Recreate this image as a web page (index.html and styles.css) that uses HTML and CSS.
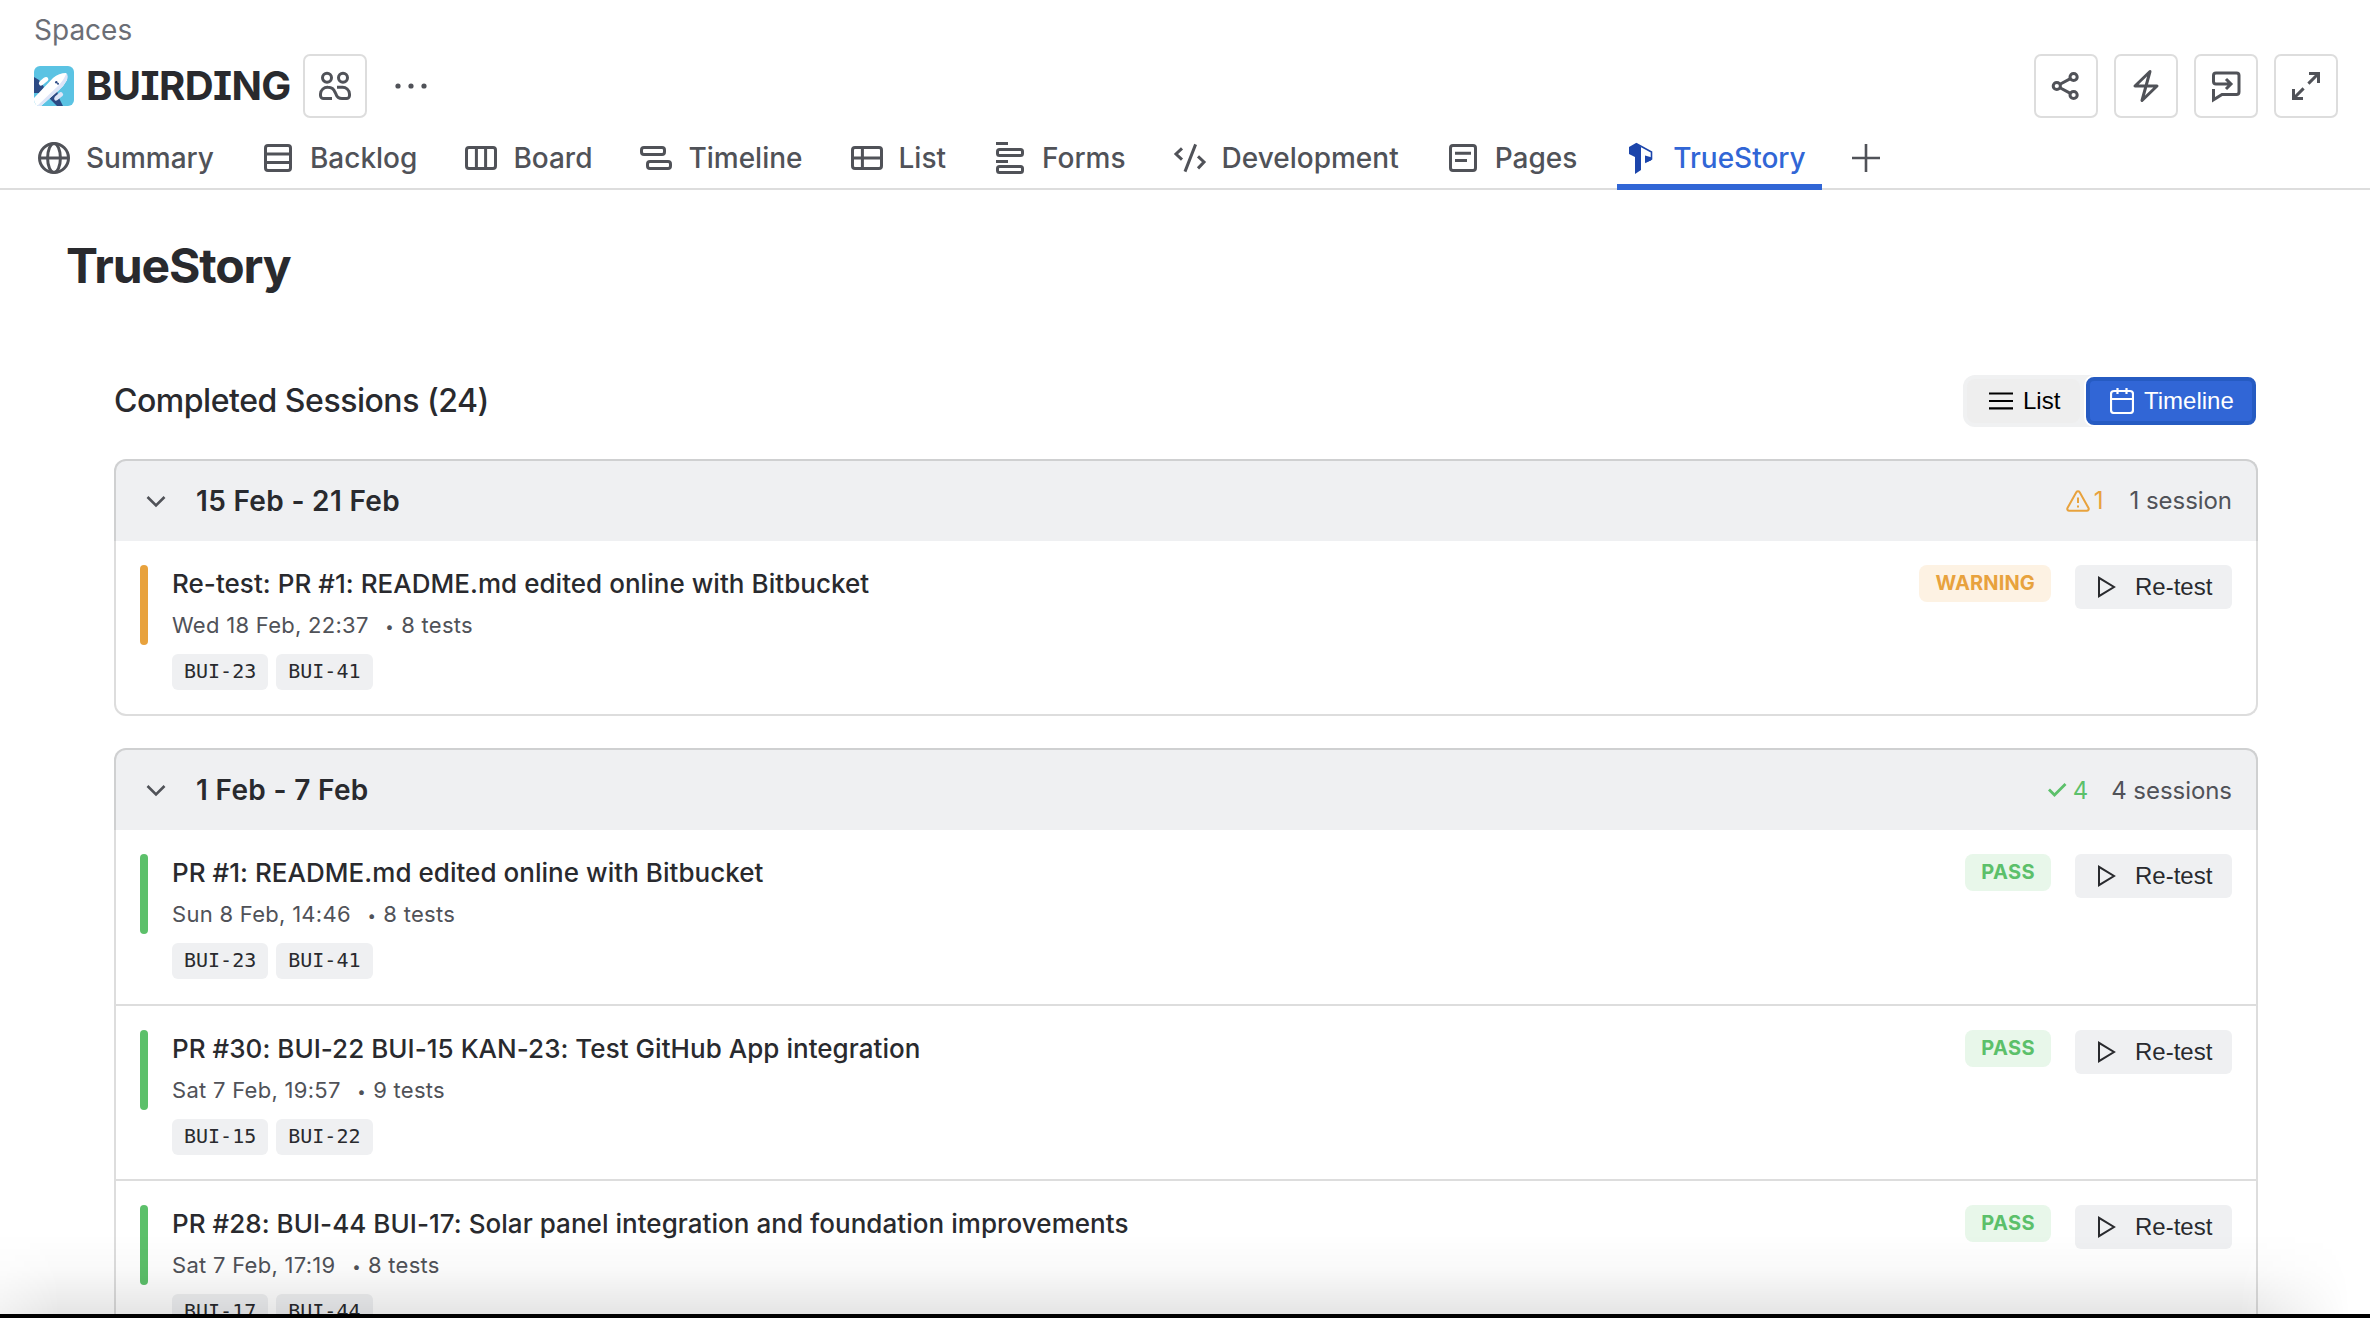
FILE: index.html
```html
<!DOCTYPE html>
<html lang="en">
<head>
    <meta charset="UTF-8">
    <meta name="viewport" content="width=device-width, initial-scale=1.0">
    <title>BUIRDING - TrueStory</title>
    <link rel="stylesheet" href="styles.css">
</head>
<body>
    <svg class="sprite" xmlns="http://www.w3.org/2000/svg">
        <symbol id="play" viewBox="0 0 24 24"><path d="M5 2.8v18.4L20 12z"/></symbol>
        <symbol id="chevron" viewBox="0 0 24 24"><path d="M3.5 8l8.5 8.5L20.500 8"/></symbol>
    </svg>

    <header class="top">
        <div class="breadcrumb">Spaces</div>
        <div class="title-row">
            <svg class="avatar" viewBox="0 0 40 40">
                <rect width="40" height="40" fill="#5bc3e3"/>
                <path d="M0 11l5 3 5 7-4 6H0zM15 32l8-7 2 7 4 8h-6z" fill="#2c4a84"/>
                <path d="M0 32L19 12Q25 7 32 7q2 3 1 7-3 6-9 11L7 40H4q-4 0-4-4z" fill="#fff"/>
                <path d="M32.500 7q2 3 .5 7-3 6-9 11L7 40H3L24 20q6-6 8.500-13z" fill="#dde5f8"/>
                <path d="M5.500 19q-1.500-2 0-3.500l4-3.500q3-2 4.500 0 1 2-.5 3l-5 4q-2 1.500-3 0z" fill="#fff"/>
                <path d="M20.500 34q-1-2 .5-3.500l4-3.500q2-2 3.500 0t0 3l-5 4q-2 1.500-3 0z" fill="#dde5f8"/>
                <circle cx="22.300" cy="16.300" r="1.200" fill="#2c4a84"/>
                <circle cx="24" cy="17.800" r="1" fill="#2c4a84"/>
            </svg>
            <h1 class="space-name">BUIRDING</h1>
            <button class="icon-btn">
                <svg class="icon" viewBox="0 0 16 16"><circle cx="4" cy="3.850" r="2.250"/><circle cx="12" cy="3.850" r="2.250"/><path d="M6.500 14.250H2.250c-.8 0-1.500-.7-1.500-1.500V12A3.500 3.500 0 0 1 4.500 8.600c2 0 3 1 3.500 2.500l.5 1c.5 1.500 1.300 2.150 3 2.150h2.250c.8 0 1.500-.7 1.500-1.500V12a3.500 3.500 0 0 0-3.750-3.400H9"/></svg>
            </button>
            <svg class="dots" viewBox="0 0 32 32"><circle cx="3" cy="16" r="2.600"/><circle cx="16" cy="16" r="2.600"/><circle cx="29" cy="16" r="2.600"/></svg>
            <div class="actions">
                <button class="icon-btn"><svg class="icon" viewBox="0 0 16 16"><circle cx="3.400" cy="8" r="1.800"/><circle cx="11.800" cy="3.500" r="1.800"/><circle cx="11.800" cy="12.500" r="1.800"/><path d="M5 7.100l5.200-2.800M5 8.900l5.200 2.800"/></svg></button>
                <button class="icon-btn"><svg class="icon" viewBox="0 0 16 16"><path d="M10 .75L2.500 8h11L6 15.250z" stroke-linejoin="round"/></svg></button>
                <button class="icon-btn"><svg class="icon" viewBox="0 0 16 16"><path d="M10 7H3c-.8 0-1.250-.6-1.250-1.250V2.750c0-.8.6-1.250 1.250-1.250h10.250c.8 0 1.250.6 1.250 1.250v8.250c0 .8-.6 1.250-1.250 1.250H6l-4.250 2.650V9.500M8 4.500L10.500 7 8 9.500"/></svg></button>
                <button class="icon-btn"><svg class="icon" viewBox="0 0 16 16"><path d="M9.500 1.750h4.750V6.500M14 2L9.200 6.800M6.500 14.250H1.750V9.500M2 14l4.800-4.800"/></svg></button>
            </div>
        </div>
        <nav class="tabs">
            <a class="tab"><svg class="icon" viewBox="0 0 16 16"><circle cx="8" cy="8" r="7.250"/><ellipse cx="8" cy="8" rx="3.200" ry="7.250"/><path d="M.75 8h14.500"/></svg><span>Summary</span></a>
            <a class="tab"><svg class="icon" viewBox="0 0 16 16"><rect x="1.750" y="1.750" width="12.500" height="12.500" rx="1.250"/><path d="M1.750 6h12.500M1.750 10.200h12.500"/></svg><span>Backlog</span></a>
            <a class="tab"><svg class="icon" viewBox="0 0 16 16"><rect x=".75" y="2.750" width="14.500" height="10.500" rx="1.250"/><path d="M5.700 2.750v10.500M10.300 2.750v10.500"/></svg><span>Board</span></a>
            <a class="tab"><svg class="icon" viewBox="0 0 16 16"><rect x=".75" y="2.750" width="11.500" height="3.500" rx="1.250"/><rect x="3.750" y="9.750" width="11.500" height="3.500" rx="1.250"/></svg><span>Timeline</span></a>
            <a class="tab"><svg class="icon" viewBox="0 0 16 16"><rect x=".75" y="2.750" width="14.500" height="10.500" rx="1.250"/><path d="M.75 8h14.500M5.700 2.750v10.500"/></svg><span>List</span></a>
            <a class="tab"><svg class="icon" viewBox="0 0 16 16"><path d="M1 .75h6M1 9.750h6"/><rect x="1.750" y="3.750" width="12.500" height="3" rx="1"/><rect x="1.750" y="12.250" width="12.500" height="3" rx="1"/></svg><span>Forms</span></a>
            <a class="tab"><svg class="icon" viewBox="0 0 16 16"><path d="M4 3.200L1 6l3 2.800M12 7.200L15 10l-3 3.200M10.800 1.200L5.500 14.800"/></svg><span>Development</span></a>
            <a class="tab"><svg class="icon" viewBox="0 0 16 16"><rect x="1.750" y="1.750" width="12.500" height="12.500" rx="1.250"/><path d="M4 5.600h8M4 9.200h6"/></svg><span>Pages</span></a>
            <a class="tab active"><svg class="logo" viewBox="0 0 32 32"><path d="M4 5l7-4 5 4v23l-6 4V15l-6-3z" fill="#1c45ab"/><path d="M11 1.500L26.500 10v7L21 20v-6" fill="none" stroke="#1c45ab" stroke-width="1.600"/><path d="M20 13.500l7 2-1 3-6 2z" fill="#1c45ab"/></svg><span>TrueStory</span></a>
            <svg class="icon plus" viewBox="0 0 16 16"><path d="M8 1v14M1 8h14"/></svg>
        </nav>
    </header>

    <main>
        <h2 class="page-title">TrueStory</h2>
        <div class="sessions">
            <div class="sessions-head">
                <h3>Completed Sessions (24)</h3>
                <div class="toggle">
                    <button class="toggle-btn"><svg viewBox="0 0 24 24"><path d="M0 4.500h24M0 12h24M0 19.300h24"/></svg>List</button>
                    <button class="toggle-btn selected"><svg viewBox="0 0 24 26"><rect x="1" y="3" width="22" height="22" rx="3"/><path d="M1 11h22M7.500 0v6M16.500 0v6"/></svg>Timeline</button>
                </div>
            </div>

            <section class="week">
                <div class="week-head">
                    <svg class="chevron"><use href="#chevron"/></svg>
                    <h4>15 Feb - 21 Feb</h4>
                    <span class="count warn"><svg viewBox="0 0 24 24"><path d="M10.300 3.200L1.500 19a1.900 1.900 0 0 0 1.700 2.800h17.600a1.900 1.900 0 0 0 1.700-2.800L13.700 3.200a2 2 0 0 0-3.400 0zM12 8.500v5.500M12 16.500v2"/></svg>1</span>
                    <span class="total">1 session</span>
                </div>
                <article class="session warning">
                    <div class="bar"></div>
                    <div class="info">
                        <div class="name">Re-test: PR #1: README.md edited online with Bitbucket</div>
                        <div class="meta"><span>Wed 18 Feb, 22:37</span><span><i>•</i> 8 tests</span></div>
                        <div class="keys"><code>BUI-23</code><code>BUI-41</code></div>
                    </div>
                    <span class="badge">WARNING</span>
                    <button class="retest"><svg><use href="#play"/></svg>Re-test</button>
                </article>
            </section>

            <section class="week">
                <div class="week-head">
                    <svg class="chevron"><use href="#chevron"/></svg>
                    <h4>1 Feb - 7 Feb</h4>
                    <span class="count ok"><svg viewBox="0 0 24 24"><path d="M4 11.500l5.500 5.500L20.500 6"/></svg>4</span>
                    <span class="total">4 sessions</span>
                </div>
                <article class="session">
                    <div class="bar"></div>
                    <div class="info">
                        <div class="name">PR #1: README.md edited online with Bitbucket</div>
                        <div class="meta"><span>Sun 8 Feb, 14:46</span><span><i>•</i> 8 tests</span></div>
                        <div class="keys"><code>BUI-23</code><code>BUI-41</code></div>
                    </div>
                    <span class="badge">PASS</span>
                    <button class="retest"><svg><use href="#play"/></svg>Re-test</button>
                </article>
                <article class="session">
                    <div class="bar"></div>
                    <div class="info">
                        <div class="name">PR #30: BUI-22 BUI-15 KAN-23: Test GitHub App integration</div>
                        <div class="meta"><span>Sat 7 Feb, 19:57</span><span><i>•</i> 9 tests</span></div>
                        <div class="keys"><code>BUI-15</code><code>BUI-22</code></div>
                    </div>
                    <span class="badge">PASS</span>
                    <button class="retest"><svg><use href="#play"/></svg>Re-test</button>
                </article>
                <article class="session">
                    <div class="bar"></div>
                    <div class="info">
                        <div class="name">PR #28: BUI-44 BUI-17: Solar panel integration and foundation improvements</div>
                        <div class="meta"><span>Sat 7 Feb, 17:19</span><span><i>•</i> 8 tests</span></div>
                        <div class="keys"><code>BUI-17</code><code>BUI-44</code></div>
                    </div>
                    <span class="badge">PASS</span>
                    <button class="retest"><svg><use href="#play"/></svg>Re-test</button>
                </article>
            </section>
        </div>
    </main>
    <div class="shade"></div>
    <div class="edge"></div>
</body>
</html>
```
FILE: styles.css
```css
* { box-sizing: border-box; }
body { margin: 0; height: 1318px; overflow: hidden; background: #fff; color: #292a2e; font-family: Inter, "Liberation Sans", sans-serif; }
h1, h2, h3, h4 { margin: 0; }
button { border: 0; padding: 0; font-family: "Liberation Sans", Arial, sans-serif; cursor: pointer; }
svg { display: block; flex-shrink: 0; }
.sprite { display: none; }

.top { height: 190px; border-bottom: 2px solid #ddd; padding-top: 12px; }
.breadcrumb { padding-left: 34px; height: 42px; font-size: 28px; line-height: 36px; color: #6b6e76; }
.title-row { display: flex; align-items: center; height: 64px; padding: 0 32px 0 34px; }
.avatar { width: 40px; height: 40px; border-radius: 6px; }
.space-name { width: 217px; padding: 0 0 2px 12px; margin-right: 12px; font-size: 40px; font-weight: 650; white-space: nowrap; letter-spacing: -0.6px; font-feature-settings: "cv08"; }
.icon-btn { width: 64px; height: 64px; display: flex; align-items: center; justify-content: center; background: #fff; border: 2px solid #ddd; border-radius: 7px; color: #505258; }
.icon { width: 32px; height: 32px; fill: none; stroke: currentColor; stroke-width: 1.5; overflow: visible; }
.dots { width: 32px; height: 32px; margin-left: 28px; fill: #505258; }
.actions { margin-left: auto; display: flex; gap: 16px; }

.tabs { display: flex; gap: 24px; padding-left: 30px; height: 72px; color: #505258; }
.tab { display: flex; align-items: center; gap: 16px; height: 72px; padding: 14px 16px 0 8px; border-bottom: 6px solid transparent; font-size: 28px; font-weight: 500; line-height: 40px; }
.tab span { white-space: nowrap; }
.tab .icon, .tab .logo { width: 32px; height: 32px; }
.tab.active { color: #3166d6; border-color: #3166d6; }
.plus { margin: 24px 0 0 4px; stroke-width: 1.3; }

.page-title { padding: 48px 0 0 66px; font-size: 48px; font-weight: 650; line-height: 56px; letter-spacing: -1.1px; }
.sessions { width: 2144px; margin: 80.6px 0 0 114px; }
.sessions-head { display: flex; justify-content: space-between; height: 84px; }
.sessions-head h3 { font-size: 32px; font-weight: 500; line-height: 52px; letter-spacing: -0.47px; }
.toggle { display: flex; gap: 6px; height: 52px; padding: 4px; background: #f0f1f2; border-radius: 12px; }
.toggle-btn { display: flex; align-items: center; gap: 10px; width: 113px; height: 44px; padding-left: 22px; border-radius: 8px; background: #eee; color: #000; font-size: 24px; }
.toggle-btn svg { width: 24px; height: 24px; fill: none; stroke: currentColor; stroke-width: 2.2; }
.toggle-btn.selected { width: 170px; height: 48px; margin: -2px -2px 0 0; padding-left: 20px; border: 4px solid #265bc2; background: #3166d6; color: #fff; box-shadow: 0 0 0 2px #fff; }
.toggle-btn.selected svg { height: 26px; }

.week { margin-bottom: 32px; }
.week-head { display: flex; align-items: center; height: 82px; padding: 0 24px 0 22px; background: #eff0f2; border: 2px solid #cfd0d1; border-bottom: 0; border-radius: 12px 12px 0 0; font-size: 24px; }
.week-head h4 { font-size: 28px; font-weight: 600; letter-spacing: 0.32px; }
.chevron { width: 24px; height: 24px; margin: 0 28px 0 6px; fill: none; stroke: #505258; stroke-width: 2.6; }
.count { display: flex; align-items: center; gap: 4px; margin-left: auto; margin-right: 23px; }
.count svg { width: 24px; height: 24px; fill: none; stroke: currentColor; stroke-width: 2; }
.count.warn { margin-right: 26px; color: #e8a23d; }
.count.ok { color: #5cc06a; }
.count.ok svg { stroke-width: 2.8; }
.total { color: #505258; letter-spacing: -0.05px; }

.session { display: flex; align-items: flex-start; height: 175.6px; padding: 24px; border: solid #ddd; border-width: 0 2px 2px; }
.session:last-child { border-radius: 0 0 12px 12px; }
.bar { width: 8px; height: 80px; border-radius: 4px; background: #5cc06a; }
.warning .bar { background: #e8a23d; }
.info { flex: 1; margin-left: 24px; }
.name { font-size: 26px; font-weight: 500; line-height: 38px; letter-spacing: 0.04px; }
.meta { display: flex; gap: 16px; margin-top: 6px; font-size: 22px; line-height: 32px; letter-spacing: 0.28px; color: #505258; }
.meta i { display: inline-block; width: 10px; font-size: 15px; font-style: normal; line-height: 1; text-align: center; vertical-align: 1px; }
.keys { display: flex; gap: 8px; margin-top: 13px; }
code { height: 36px; padding: 0 12px; border-radius: 6px; background: #eff0f2; font: 20px/35px "DejaVu Sans Mono", monospace; }
.badge { height: 37px; padding: 0 16px; border-radius: 8px; background: #e8f7ea; color: #5cc06a; font-size: 20px; font-weight: 700; line-height: 36px; letter-spacing: 0.4px; }
.warning .badge { background: #fdf2e3; color: #e8a23d; letter-spacing: 0.15px; }
.retest { display: flex; align-items: center; gap: 17px; width: 157px; height: 44px; margin-left: 24px; padding-left: 19px; border-radius: 6px; background: #eff0f2; color: #292a2e; font-size: 24px; }
.retest svg { width: 24px; height: 24px; fill: none; stroke: currentColor; stroke-width: 2; }

/* shadow above the dark edge of the window */
.shade { position: absolute; left: 0; right: 0; bottom: 4px; height: 80px; background: linear-gradient(rgba(0,0,0,0), rgba(0,0,0,.025) 45%, rgba(0,0,0,.1)); -webkit-mask-image: linear-gradient(90deg, rgba(0,0,0,.5), #000 60px, #000 2240px, transparent 2350px); mask-image: linear-gradient(90deg, rgba(0,0,0,.5), #000 60px, #000 2240px, transparent 2350px); }
.edge { position: absolute; left: 0; right: 0; bottom: 0; height: 4px; background: #000; }
```
